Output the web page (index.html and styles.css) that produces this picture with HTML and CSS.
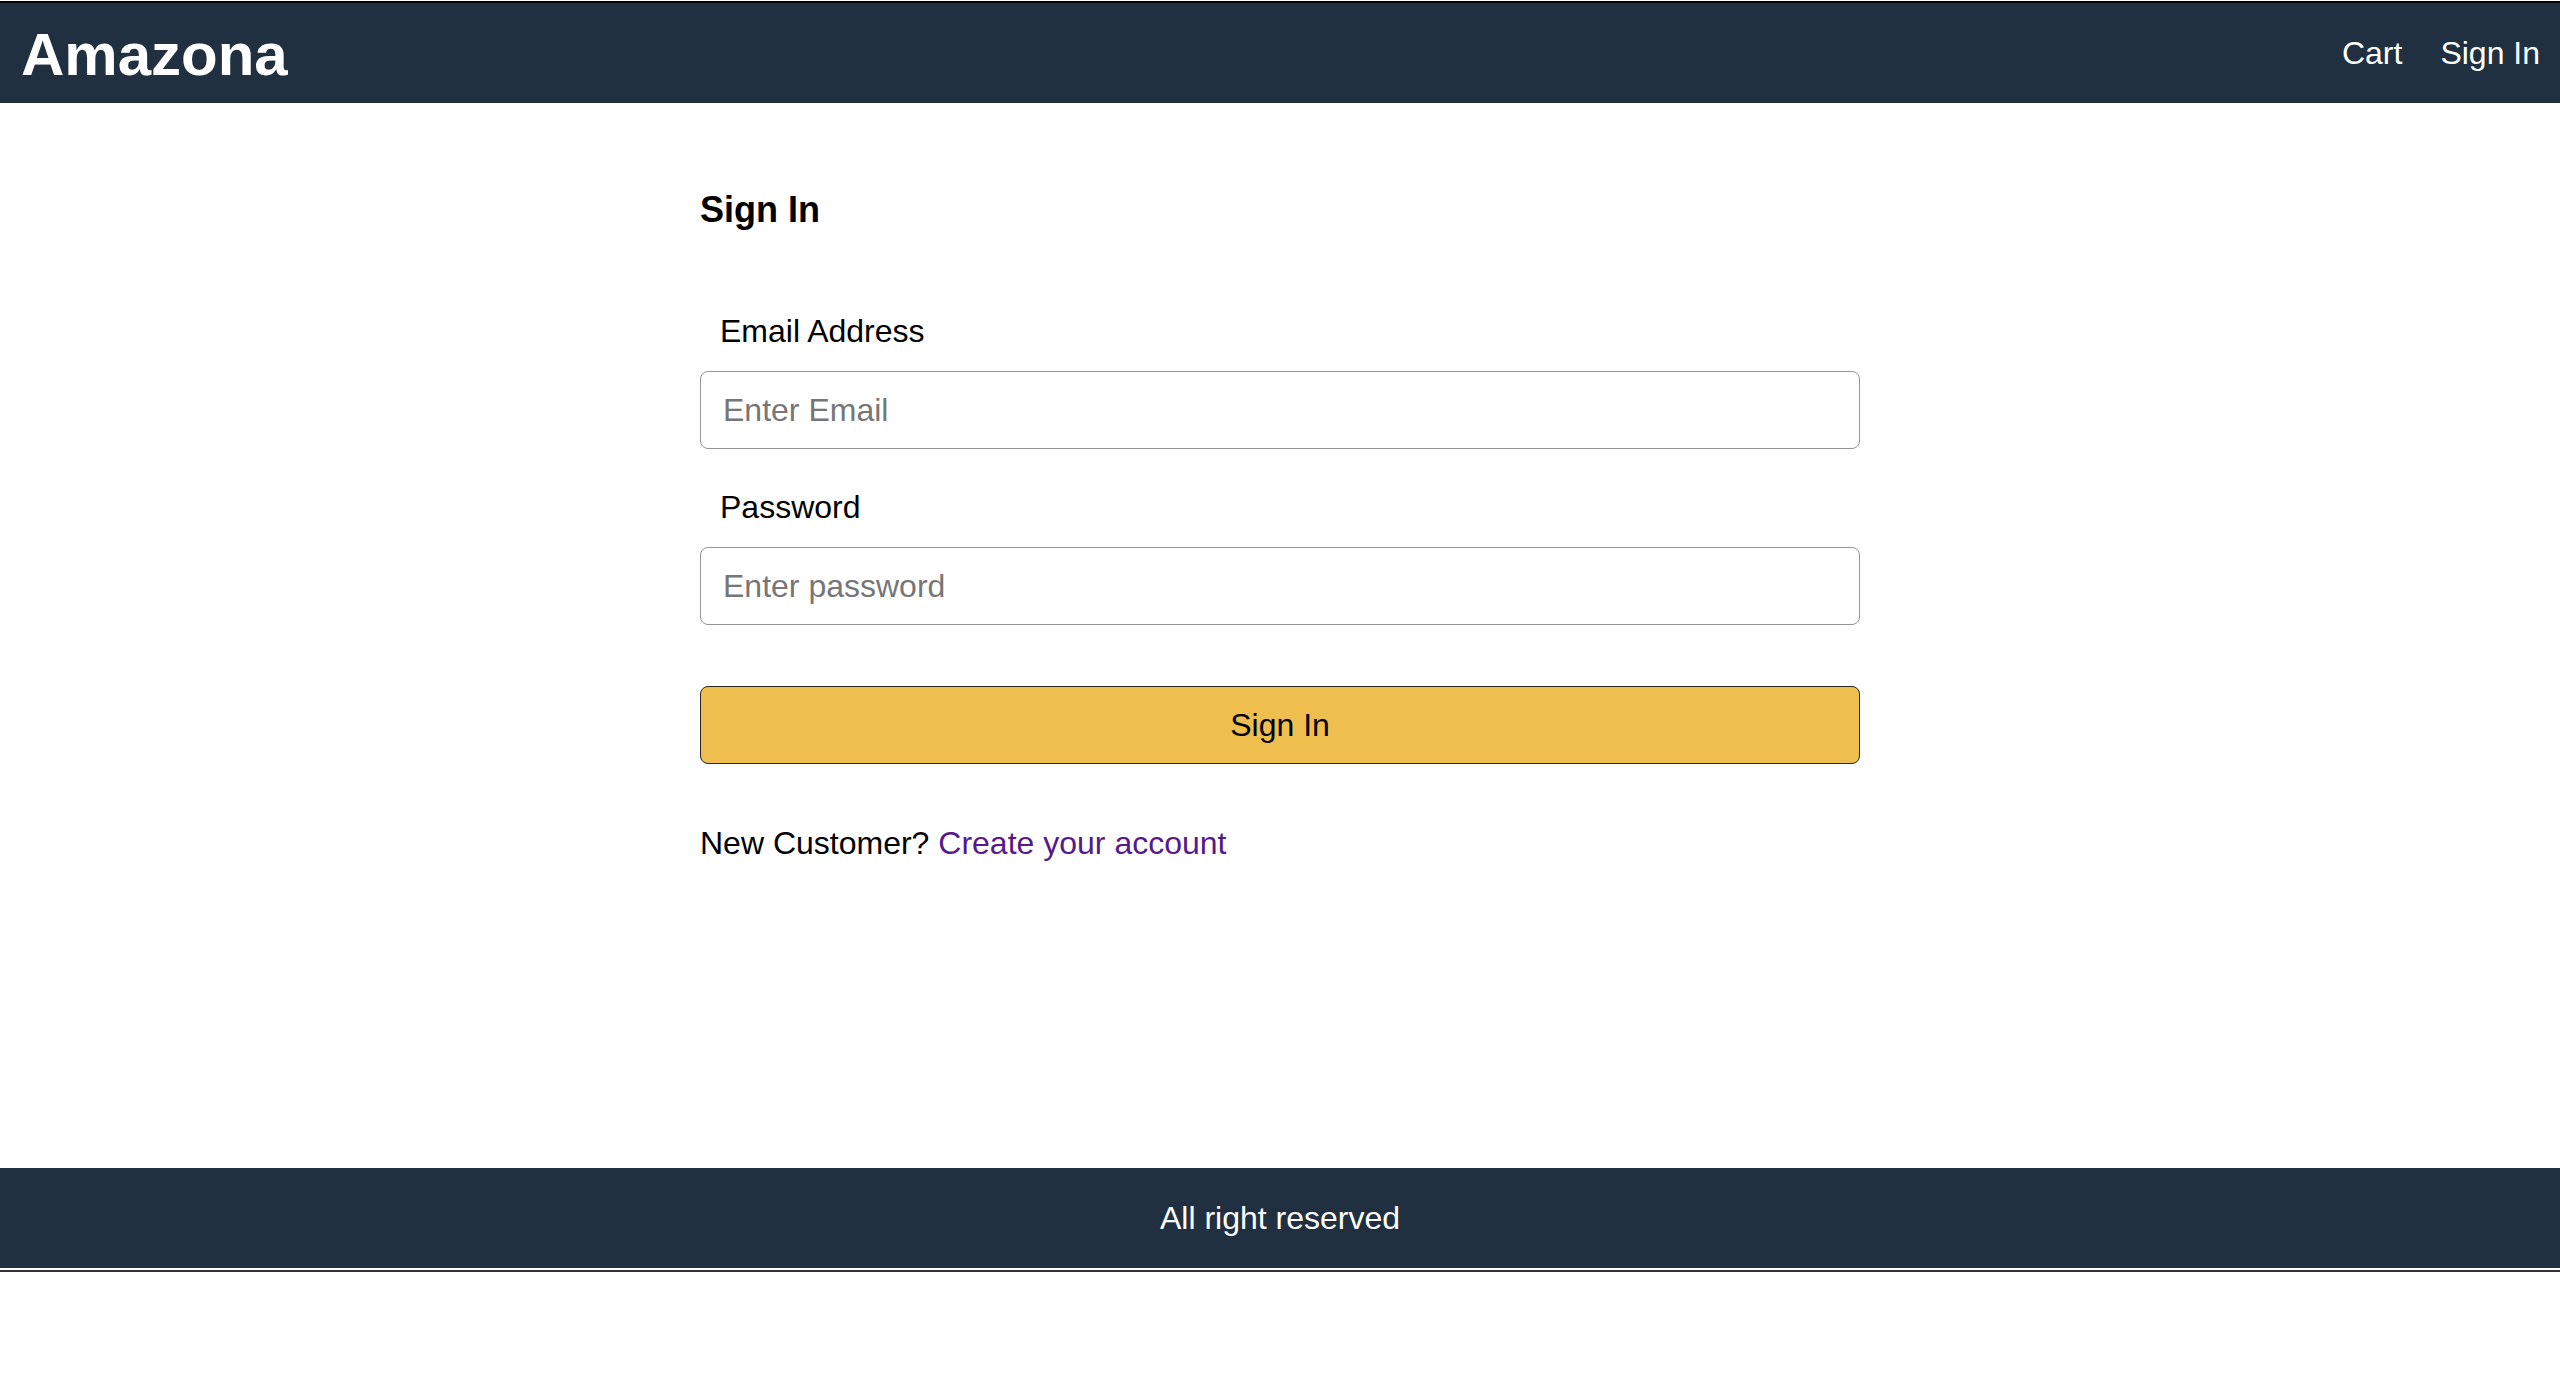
FILE: index.html
```html
<!DOCTYPE html>
<html lang="en">
<head>
<meta charset="utf-8">
<title>Amazona</title>
<link rel="stylesheet" href="styles.css">
</head>
<body>
<div class="topline"></div>
<div class="app">
  <header class="header">
    <a class="brand" href="#">Amazona</a>
    <nav class="nav">
      <a href="#">Cart</a>
      <a href="#">Sign In</a>
    </nav>
  </header>
  <main class="main">
    <form class="form">
      <h1 class="title">Sign In</h1>
      <div class="field field-first">
        <label for="email">Email Address</label>
        <input id="email" type="email" placeholder="Enter Email">
      </div>
      <div class="field">
        <label for="password">Password</label>
        <input id="password" type="password" placeholder="Enter password">
      </div>
      <button class="primary" type="button">Sign In</button>
      <div class="new-customer">New Customer? <a href="#">Create your account</a></div>
    </form>
  </main>
  <footer class="footer">All right reserved</footer>
</div>
<div class="bottomline"></div>
</body>
</html>
```
FILE: styles.css
```css
html, body {
  margin: 0;
  padding: 0;
  background: #fff;
}
body {
  font-family: "Liberation Sans", Arial, Helvetica, sans-serif;
  font-size: 32px;
  color: #000;
}
.topline {
  margin-top: 1px;
  height: 2px;
  background: #000;
}
.app {
  display: grid;
  grid-template-rows: 100px 1fr 100px;
  height: 1265px;
}
.header {
  background: #203040;
  display: flex;
  align-items: center;
  justify-content: space-between;
  padding: 0 20px 0 21px;
}
.brand {
  color: #fff;
  font-weight: bold;
  font-size: 60px;
  line-height: 60px;
  padding-top: 3px;
  text-decoration: none;
}
.nav {
  display: flex;
  gap: 38px;
}
.nav a {
  color: #fff;
  text-decoration: none;
  font-size: 32px;
  line-height: 40px;
}
.main {
  padding-top: 86px;
}
.form {
  width: 1160px;
  margin: 0 auto;
  display: flex;
  flex-direction: column;
}
.title {
  margin: 0;
  font-size: 36px;
  line-height: 42px;
  font-weight: bold;
}
.field {
  display: flex;
  flex-direction: column;
  gap: 20px;
  margin-top: 38px;
}
.field-first {
  margin-top: 80px;
}
.field label {
  padding-left: 20px;
  line-height: 40px;
}
.field input {
  box-sizing: border-box;
  width: 100%;
  height: 78px;
  margin: 0;
  font-family: inherit;
  font-size: 32px;
  line-height: 36px;
  padding: 20px 22px;
  border: 1px solid #959595;
  border-radius: 8px;
  outline: none;
  color: #000;
}
.field input::placeholder {
  color: #767676;
}
.primary {
  margin-top: 61px;
  box-sizing: border-box;
  height: 78px;
  width: 100%;
  background: #eebf4e;
  border: 1px solid #262626;
  border-radius: 8px;
  font-family: inherit;
  font-size: 32px;
  line-height: 36px;
  color: #000;
  padding: 20px;
}
.new-customer {
  margin-top: 59px;
  line-height: 40px;
}
.new-customer a {
  color: #551a8b;
  text-decoration: none;
}
.footer {
  background: #203040;
  color: #fff;
  display: flex;
  align-items: center;
  justify-content: center;
  font-size: 32px;
}
.bottomline {
  position: relative;
  margin-top: 2px;
  height: 2px;
  background: #333;
}
.bottomline::before {
  content: "";
  position: absolute;
  left: 0;
  top: 0;
  width: 7px;
  height: 3px;
  background: #333;
}
.bottomline::after {
  content: "";
  position: absolute;
  right: 0;
  top: 0;
  width: 4px;
  height: 5px;
  background: #333;
}
```
